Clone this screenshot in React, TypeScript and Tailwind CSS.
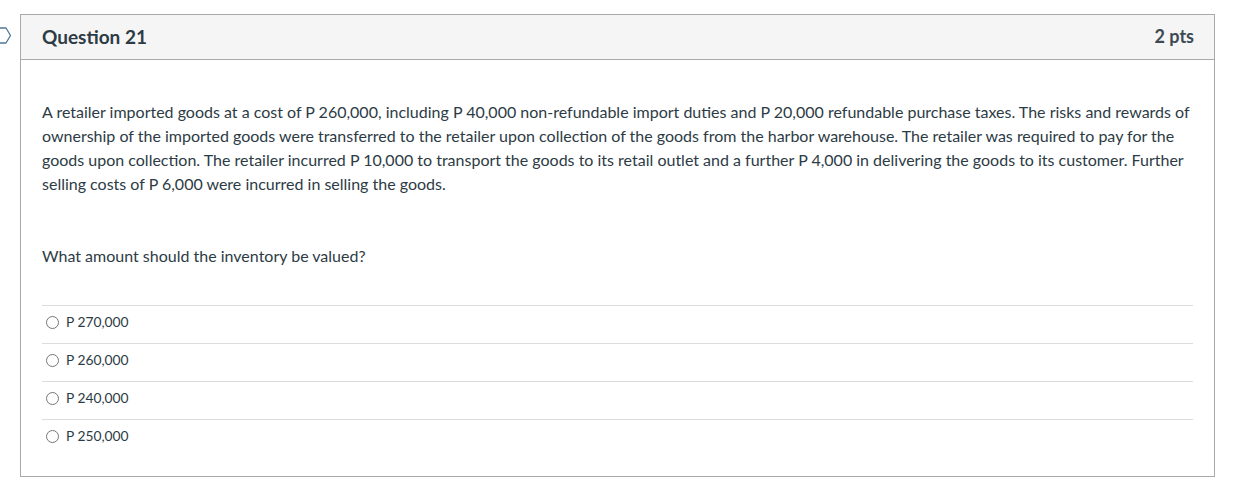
const answers = ['P 270,000', 'P 260,000', 'P 240,000', 'P 250,000']

export default function App() {
  return (
    <div className="relative h-[492px] w-[1257px] bg-white pt-[14px] pl-5 text-[#2d3b45]" style={{ fontFamily: 'Lato, "Noto Sans", sans-serif' }}>
      <svg className="absolute left-0 top-[27px]" width="12" height="17" viewBox="0 0 12 17" fill="none">
        <path d="M-4 1 H6 L10.5 8.5 L6 16 H-4" stroke="#4f7796" strokeWidth="1.3" strokeLinejoin="round" />
      </svg>
      <div className="w-[1195px] border border-[#a9a9a9]">
        <div className="flex h-[45px] items-center justify-between border-b border-[#a9a9a9] bg-[#f5f5f5] pb-[2px] pl-[21px] pr-[20px]">
          <h2 className="text-[19px] font-bold leading-none">Question 21</h2>
          <span className="text-[18px] font-bold leading-none text-[#3d4a53]">2 pts</span>
        </div>
        <div className="px-[21px] pt-[40px] pb-[19px]">
          <p className="text-[16px] leading-[24px]">
            A retailer imported goods at a cost of P 260,000, including P 40,000 non-refundable import duties and P 20,000 refundable purchase taxes. The risks and rewards of ownership of the imported goods were transferred to the retailer upon collection of the goods from the harbor warehouse. The retailer was required to pay for the goods upon collection. The retailer incurred P 10,000 to transport the goods to its retail outlet and a further P 4,000 in delivering the goods to its customer. Further selling costs of P 6,000 were incurred in selling the goods.
          </p>
          <p className="mt-[48px] text-[16px] leading-[24px]">What amount should the inventory be valued?</p>
          <div className="mt-[37px]">
            {answers.map((a) => (
              <label key={a} className="flex h-[38px] items-center gap-[7px] border-t border-[#dcdcdc] pb-[4px] pl-[4px] text-[13.8px]">
                <span className="h-[13px] w-[13px] rounded-full border border-[#767676] bg-white" />
                <span>{a}</span>
              </label>
            ))}
          </div>
        </div>
      </div>
    </div>
  )
}
